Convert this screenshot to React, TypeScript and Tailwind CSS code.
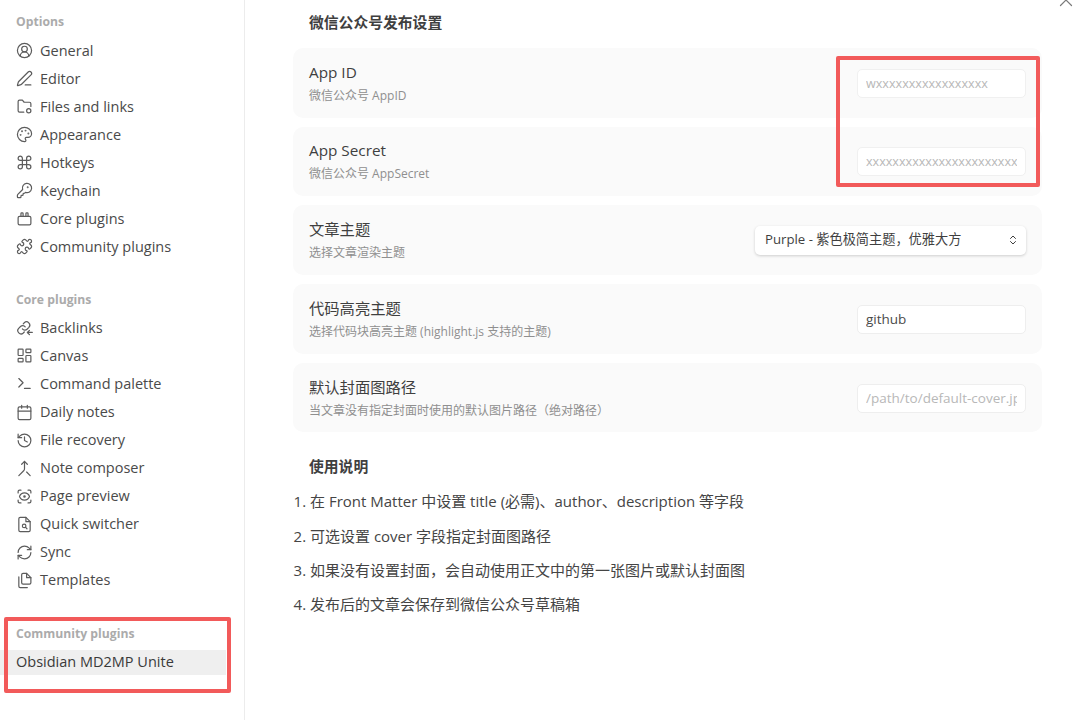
import React from "react";
import {
  CircleUserRound, PenLine, Palette, Command, KeyRound, Puzzle,
  LayoutDashboard, Terminal, Calendar, History, Merge, ScanEye, RefreshCw, X, ChevronsUpDown,
} from "lucide-react";

const font = "font-['Open_Sans','Noto_Sans_CJK_SC',sans-serif]";

type IconProps = { size?: number; strokeWidth?: number };

function Svg({ size = 17, strokeWidth = 1.8, children }: IconProps & { children: React.ReactNode }) {
  return (
    <svg width={size} height={size} viewBox="0 0 24 24" fill="none" stroke="currentColor" strokeWidth={strokeWidth} strokeLinecap="round" strokeLinejoin="round">
      {children}
    </svg>
  );
}

function CorePlug(p: IconProps) {
  return (
    <Svg {...p}>
      <rect x="3" y="9" width="18" height="12" rx="2" />
      <path d="M7 9V5a1 1 0 0 1 1-1h1a1 1 0 0 1 1 1v4M14 9V5a1 1 0 0 1 1-1h1a1 1 0 0 1 1 1v4" />
    </Svg>
  );
}

function FolderDot(p: IconProps) {
  return (
    <Svg {...p}>
      <path d="M11 20H5a2 2 0 0 1-2-2V5a2 2 0 0 1 2-2h4l2.5 3H19a2 2 0 0 1 2 2v4" />
      <circle cx="18" cy="18" r="3" />
    </Svg>
  );
}

function Backlink(p: IconProps) {
  return (
    <Svg {...p}>
      <path d="M9 14a4.5 4.5 0 0 0 6.6.4l2.6-2.6a4.6 4.6 0 0 0-6.5-6.5l-1.5 1.5" />
      <path d="M13 11a4.5 4.5 0 0 0-6.6-.4l-2.6 2.6a4.6 4.6 0 0 0 6.5 6.5l1.4-1.4" />
      <path d="M23 19h-7M19 16l-3 3 3 3" />
    </Svg>
  );
}

function FileFind(p: IconProps) {
  return (
    <Svg {...p}>
      <path d="M14 2H6a2 2 0 0 0-2 2v16a2 2 0 0 0 2 2h12a2 2 0 0 0 2-2V8z" />
      <path d="M14 2v6h6" />
      <circle cx="11.5" cy="14" r="2.5" />
      <path d="M15.5 18l-2.2-2.2" />
    </Svg>
  );
}

function Templates(p: IconProps) {
  return (
    <Svg {...p}>
      <path d="M15 2h-5a2 2 0 0 0-2 2v11a2 2 0 0 0 2 2h9a2 2 0 0 0 2-2V8z" />
      <path d="M15 2v6h6" />
      <path d="M4 7v13a2 2 0 0 0 2 2h10" />
    </Svg>
  );
}

const options: [string, any][] = [
  ["General", CircleUserRound],
  ["Editor", PenLine],
  ["Files and links", FolderDot],
  ["Appearance", Palette],
  ["Hotkeys", Command],
  ["Keychain", KeyRound],
  ["Core plugins", CorePlug],
  ["Community plugins", Puzzle],
];
const core: [string, any][] = [
  ["Backlinks", Backlink],
  ["Canvas", LayoutDashboard],
  ["Command palette", Terminal],
  ["Daily notes", Calendar],
  ["File recovery", History],
  ["Note composer", Merge],
  ["Page preview", ScanEye],
  ["Quick switcher", FileFind],
  ["Sync", RefreshCw],
  ["Templates", Templates],
];

function Nav({ label, Icon }: { label: string; Icon: any }) {
  return (
    <div className="flex h-[28.05px] items-center gap-[7px] pl-[16px] text-[14.5px] text-[#4a4a4a]">
      <span className="text-[#5c5c5c]"><Icon size={17} strokeWidth={1.7} /></span>
      <span>{label}</span>
    </div>
  );
}

function Label({ children }: { children: React.ReactNode }) {
  return <div className="pl-[16px] text-[12.2px] font-bold leading-[16px] text-[#ababab]">{children}</div>;
}

function Row({ title, desc, children }: { title: string; desc: string; children: React.ReactNode }) {
  return (
    <div className="flex h-[69.5px] items-center justify-between rounded-[10px] bg-[#fafafa] pl-[16px] pr-[16px]">
      <div>
        <div className="text-[15.3px] leading-[20px] text-[#3f3f3f]">{title}</div>
        <div className="mt-[6px] text-[12px] leading-[16px] text-[#8f8f8f]">{desc}</div>
      </div>
      {children}
    </div>
  );
}

function Field({ ph, value, small }: { ph?: string; value?: string; small?: boolean }) {
  return (
    <input
      readOnly
      placeholder={ph}
      value={value}
      className={
        small
          ? "mt-[1px] h-[29px] w-[169px] rounded-[5px] border border-[#f0f0f0] bg-white px-[8px] text-[12.6px] text-[#4a4a4a] outline-none placeholder:text-[#b8b8b8]"
          : "mt-[1px] h-[29px] w-[169px] rounded-[5px] border border-[#eeeeee] bg-white px-[8px] text-[13.5px] text-[#4a4a4a] outline-none placeholder:text-[#b8b8b8]"
      }
    />
  );
}

export default function App() {
  return (
    <div className={`${font} relative flex h-[720px] w-[1080px] overflow-hidden bg-white`}>
      <aside className="w-[245px] shrink-0 border-r border-[#ececec] pt-[14px]">
        <Label>Options</Label>
        <div className="mt-[6.5px]">{options.map(([l, I]) => <Nav key={l} label={l} Icon={I} />)}</div>
        <div className="mt-[31.5px]"><Label>Core plugins</Label></div>
        <div className="mt-[5.5px]">{core.map(([l, I]) => <Nav key={l} label={l} Icon={I} />)}</div>
        <div className="mt-[31.5px]"><Label>Community plugins</Label></div>
        <div className="relative mt-[8px] flex h-[25px] w-[226px] items-center bg-[#efefef] pl-[16px] text-[14.5px] text-[#3a3a3a]">Obsidian MD2MP Unite</div>
      </aside>
      <main className="flex-1 pl-[48px] pr-[38px] pt-[12px]">
        <h2 className="pl-[16px] text-[14.8px] font-bold leading-[20px] text-[#3f3f3f]">微信公众号发布设置</h2>
        <div className="mt-[16px] flex flex-col gap-[9.2px]">
          <Row title="App ID" desc="微信公众号 AppID"><Field small ph="wxxxxxxxxxxxxxxxxx" /></Row>
          <Row title="App Secret" desc="微信公众号 AppSecret"><Field small ph="xxxxxxxxxxxxxxxxxxxxxxxxxxxxxxxx" /></Row>
          <Row title="文章主题" desc="选择文章渲染主题">
            <div className="flex h-[29px] w-[271px] items-center justify-between rounded-[5px] bg-white pl-[10px] pr-[7px] text-[13.2px] text-[#3f3f3f] shadow-[0_1px_3px_rgba(0,0,0,0.18)]">
              <span>Purple - 紫色极简主题，优雅大方</span>
              <ChevronsUpDown size={12} strokeWidth={2} />
            </div>
          </Row>
          <Row title="代码高亮主题" desc="选择代码块高亮主题 (highlight.js 支持的主题)"><Field value="github" /></Row>
          <Row title="默认封面图路径" desc="当文章没有指定封面时使用的默认图片路径（绝对路径）"><Field ph="/path/to/default-cover.jpg" /></Row>
        </div>
        <h3 className="mt-[24px] pl-[16px] text-[14.8px] font-bold leading-[20px] text-[#3f3f3f]">使用说明</h3>
        <ol className="mt-[15px] list-decimal pl-[17px] text-[15px] leading-[20px] text-[#454545]">
          <li className="mb-[14.4px]">在 Front Matter 中设置 title (必需)、author、description 等字段</li>
          <li className="mb-[14.4px]">可选设置 cover 字段指定封面图路径</li>
          <li className="mb-[14.4px]">如果没有设置封面，会自动使用正文中的第一张图片或默认封面图</li>
          <li>发布后的文章会保存到微信公众号草稿箱</li>
        </ol>
      </main>
      <div className="absolute right-[3.5px] top-[-11px] text-[#7a7a7a]"><X size={22} strokeWidth={1.3} /></div>
      <div className="absolute left-[836px] top-[56px] h-[131px] w-[204px] rounded-[2px] border-[4px] border-[#f25a5a]" />
      <div className="absolute left-[4px] top-[617px] h-[76px] w-[227px] rounded-[2px] border-[4px] border-[#f25a5a]" />
    </div>
  );
}
